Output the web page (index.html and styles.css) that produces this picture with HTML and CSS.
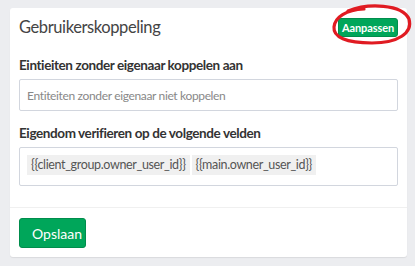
FILE: index.html
```html
<!DOCTYPE html>
<html lang="nl">
<head>
  <meta charset="UTF-8" />
  <title>Gebruikerskoppeling</title>
  <link rel="stylesheet" href="styles.css">
</head>
<body>
  <div class="box">
    <div class="box-header">
      <h3 class="box-title">Gebruikerskoppeling</h3>
      <button class="btn btn-sm">Aanpassen</button>
    </div>

    <div class="box-body">
      <div class="form-group">
        <label>Eintieiten zonder eigenaar koppelen aan</label>
        <div class="input"><span class="placeholder">Entiteiten zonder eigenaar niet koppelen</span></div>
      </div>
      <div class="form-group">
        <label>Eigendom verifieren op de volgende velden</label>
        <div class="tags">
          <span class="tag">{{client_group.owner_user_id}}</span>
          <span class="tag">{{main.owner_user_id}}</span>
        </div>
      </div>
    </div>

    <div class="box-footer">
      <button class="btn">Opslaan</button>
    </div>
  </div>

  <!-- red marker circle drawn over the button -->
  <svg class="marker" width="415" height="266" viewBox="0 0 415 266">
    <path d="M348 11 C368 3 402 4 409 19 C413 33 398 43 372 43 C346 43 333 37 334 27 C335 17 346 10 364 9"
          fill="none" stroke="#e01b22" stroke-width="3.2" stroke-linecap="round" />
  </svg>
</body>
</html>
```

FILE: styles.css
```css
body { margin: 0; padding: 8px 8px 9px 10px; background: #ecedf0; font-family: Lato, "Liberation Sans", sans-serif; }
.box { background: #fff; border-radius: 3px; box-shadow: 0 1px 1px rgba(0,0,0,0.08); }
.box-header { display: flex; justify-content: space-between; align-items: flex-start; padding: 6px 9px 0 9px; height: 38px; box-sizing: border-box; }
.box-title { margin: 0; font-size: 16.5px; font-weight: normal; color: #444; line-height: 26px; letter-spacing: -0.4px; }
.btn { background: #00a65a; color: #fff; border: 1px solid #008d4c; border-radius: 3px; font-family: inherit; font-size: 14px; padding: 0 12px; height: 30px; cursor: pointer; }
.btn-sm { font-size: 11px; font-weight: bold; height: 19px; width: 60px; padding: 0; margin-top: 4px; letter-spacing: -0.1px; }
.box-body { padding: 9px 9px 21px 9px; }
.form-group { margin-bottom: 12px; }
.form-group:last-child { margin-bottom: 0; }
label { display: block; font-weight: bold; font-size: 13.5px; color: #333; line-height: 20px; margin-bottom: 4px; letter-spacing: -0.4px; }
.input { height: 32px; border: 1px solid #d2d6de; border-radius: 2px; box-sizing: border-box; display: flex; align-items: center; padding: 0 7px; }
.placeholder { font-size: 12px; color: #888; letter-spacing: -0.35px; }
.tags { border: 1px solid #d2d6de; border-radius: 2px; height: 39px; box-sizing: border-box; padding: 7px; display: flex; gap: 2px; align-items: flex-start; }
.tag { background: #f0f0f0; color: #555; font-size: 12.5px; line-height: 20px; padding: 0 4px; letter-spacing: -0.35px; }
.box-footer { border-top: 1px solid #f0f0f0; padding: 10px 9px 9px 9px; }
.box-footer .btn { width: 67px; }
.marker { position: absolute; left: 0; top: 0; pointer-events: none; }
```
